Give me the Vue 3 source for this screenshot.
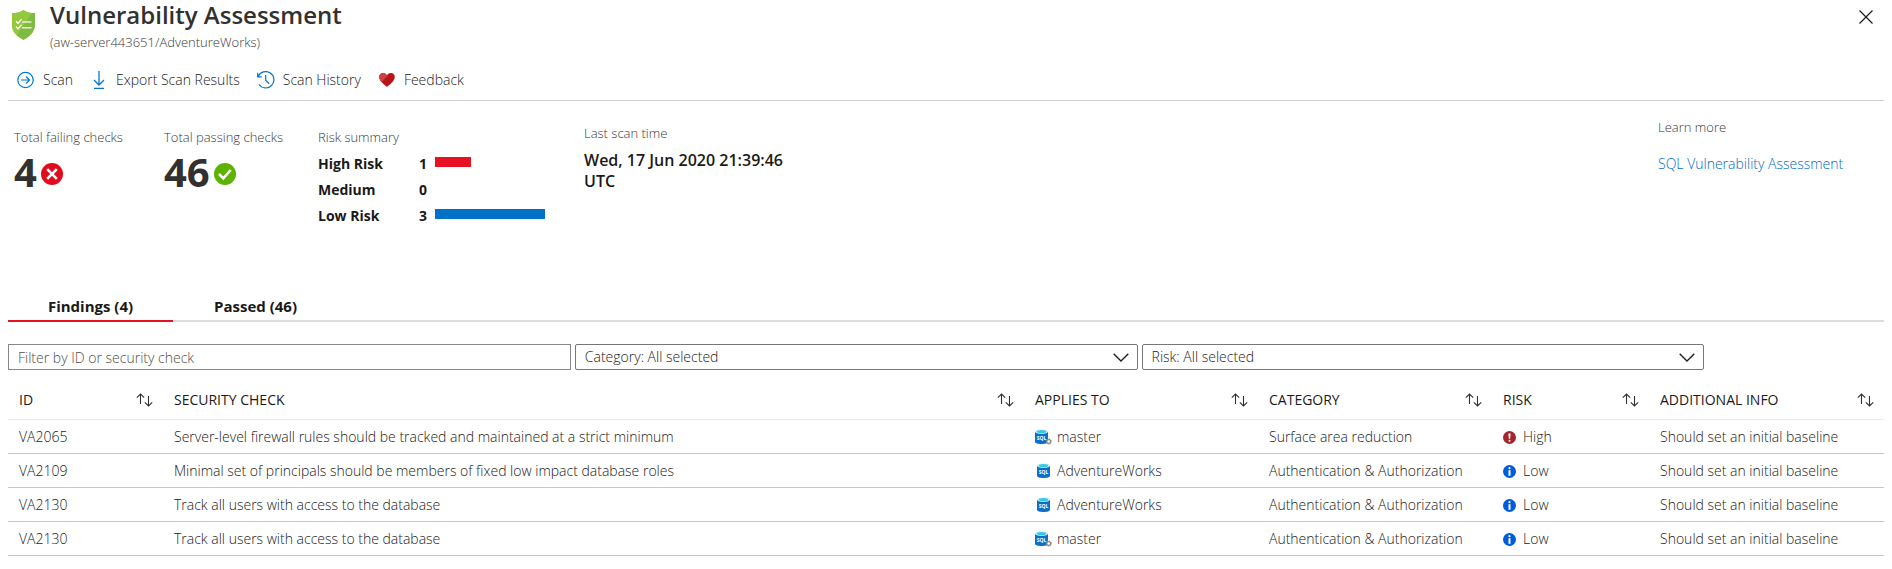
<script setup>
import { ref } from 'vue'

const search = ref('')
const category = ref('all')
const risk = ref('all')
const activeTab = ref('findings')

const tabs = [
  { id: 'findings', label: 'Findings (4)' },
  { id: 'passed', label: 'Passed (46)' },
]

const risks = [
  { label: 'High Risk', count: 1, width: 36, tone: 'high' },
  { label: 'Medium', count: 0, width: 0, tone: 'medium' },
  { label: 'Low Risk', count: 3, width: 110, tone: 'low' },
]

const columns = [
  { key: 'id', label: 'ID' },
  { key: 'check', label: 'SECURITY CHECK' },
  { key: 'target', label: 'APPLIES TO' },
  { key: 'category', label: 'CATEGORY' },
  { key: 'risk', label: 'RISK' },
  { key: 'info', label: 'ADDITIONAL INFO' },
]

const auth = 'Authentication & Authorization'
const info = 'Should set an initial baseline'
const rows = [
  { id: 'VA2065', check: 'Server-level firewall rules should be tracked and maintained at a strict minimum', target: 'master', system: true, category: 'Surface area reduction', risk: 'High', info },
  { id: 'VA2109', check: 'Minimal set of principals should be members of fixed low impact database roles', target: 'AdventureWorks', system: false, category: auth, risk: 'Low', info },
  { id: 'VA2130', check: 'Track all users with access to the database', target: 'AdventureWorks', system: false, category: auth, risk: 'Low', info },
  { id: 'VA2130', check: 'Track all users with access to the database', target: 'master', system: true, category: auth, risk: 'Low', info },
]
</script>

<template>
  <main class="blade">
    <header class="head">
      <svg class="shield" viewBox="0 0 24 30" aria-hidden="true">
        <path d="M12 0C9 2.6 5 3 .5 3v12c0 7.500 6 12 11.500 15 5.500-3 11.500-7.500 11.500-15V3C19 3 15 2.600 12 0z" fill="#7fba42" />
        <path d="M12 0C9 2.600 5 3 .5 3v12c0 4.500 2 7.700 4.700 10.300L20.500 3C17 2.800 14.500 2.200 12 0z" fill="#95c93d" />
        <path d="M4.500 11.200l2 2 3.600-4M4.500 16.800l2 2 3.600-4" fill="none" stroke="#fff" stroke-width="1.300" />
        <path d="M10.500 12h9.500M10.500 17.700h9.500" stroke="#e6f2d6" stroke-width="1.600" />
      </svg>
      <div class="titles">
        <h1>Vulnerability Assessment</h1>
        <p>(aw-server443651/AdventureWorks)</p>
      </div>
      <button class="close" type="button" aria-label="Close">
        <svg viewBox="0 0 14 14" aria-hidden="true"><path d="M.5.5l13 13M13.500.5l-13 13" stroke="#1b1a19" stroke-width="1.200" /></svg>
      </button>
    </header>

    <nav class="toolbar" aria-label="Actions">
      <button type="button">
        <svg viewBox="0 0 18 18" aria-hidden="true"><g fill="none" stroke="#0078d4" stroke-width="1.200"><circle cx="8.500" cy="9" r="7.700" /><path d="M4 9h8.500M9 5.500L12.500 9 9 12.500" /></g></svg>
        Scan
      </button>
      <button type="button">
        <svg viewBox="0 0 18 18" aria-hidden="true"><path d="M9 0v14M4 9l5 5 5-5M4 17.300h10" fill="none" stroke="#0078d4" stroke-width="1.300" /></svg>
        Export Scan Results
      </button>
      <button type="button">
        <svg viewBox="0 0 18 18" aria-hidden="true"><path d="M1.200 5.500A8.200 8.200 0 1 1 2 13.500M.7 1.800v4h4M8.700 4v5.300l3.500 3.400" fill="none" stroke="#0078d4" stroke-width="1.200" /></svg>
        Scan History
      </button>
      <button type="button">
        <svg viewBox="0 0 18 18" aria-hidden="true">
          <path d="M9 16C5.500 13 1.200 9.500 1.200 6 1.200 3.500 3 2 5 2c1.800 0 3.300 1 4 2.500C9.700 3 11.200 2 13 2c2 0 3.800 1.500 3.800 4 0 3.500-4.300 7-7.800 10z" fill="#ba141a" />
          <path d="M3.500 11.300C2.200 9.700 1.200 7.800 1.200 6 1.200 3.500 3 2 5 2c1.800 0 3.300 1 4 2.500.6-1.200 1.600-2 2.700-2.300z" fill="#cf4045" />
        </svg>
        Feedback
      </button>
    </nav>

    <section class="summary">
      <div class="stat">
        <p class="label">Total failing checks</p>
        <div class="total">
          4
          <svg viewBox="0 0 22 22" aria-hidden="true"><circle cx="11" cy="11" r="11" fill="#e00b1c" /><path d="M6.200 6.200l9.600 9.600M15.800 6.200l-9.600 9.600" stroke="#fff" stroke-width="2.600" /></svg>
        </div>
      </div>
      <div class="stat passing">
        <p class="label">Total passing checks</p>
        <div class="total">
          46
          <svg viewBox="0 0 22 22" aria-hidden="true"><circle cx="11" cy="11" r="11" fill="#5db300" /><path d="M5 11l4.300 4.300L16.700 7" fill="none" stroke="#fff" stroke-width="2.600" /></svg>
        </div>
      </div>
      <div class="risks">
        <p class="label">Risk summary</p>
        <ul>
          <li v-for="r in risks" :key="r.label">
            <span>{{ r.label }}</span>
            <span class="count">{{ r.count }}</span>
            <i :class="r.tone" :style="{ width: r.width + 'px' }"></i>
          </li>
        </ul>
      </div>
      <div class="scan">
        <p class="label">Last scan time</p>
        <p class="when">Wed, 17 Jun 2020 21:39:46 UTC</p>
      </div>
      <div class="learn">
        <p class="label">Learn more</p>
        <a href="#">SQL Vulnerability Assessment</a>
      </div>
    </section>

    <div class="tabs" role="tablist">
      <button v-for="t in tabs" :key="t.id" type="button" role="tab" :aria-selected="activeTab === t.id" :class="{ active: activeTab === t.id }" @click="activeTab = t.id">{{ t.label }}</button>
    </div>

    <div class="filters">
      <input v-model="search" type="text" placeholder="Filter by ID or security check" aria-label="Filter by ID or security check" />
      <div class="drop">
        <select v-model="category" aria-label="Category">
          <option value="all">Category: All selected</option>
        </select>
        <svg viewBox="0 0 16 9" aria-hidden="true"><path d="M.7.700L8 8 15.300.7" fill="none" stroke="#1b1a19" stroke-width="1.300" /></svg>
      </div>
      <div class="drop">
        <select v-model="risk" aria-label="Risk">
          <option value="all">Risk: All selected</option>
        </select>
        <svg viewBox="0 0 16 9" aria-hidden="true"><path d="M.7.700L8 8 15.300.7" fill="none" stroke="#1b1a19" stroke-width="1.300" /></svg>
      </div>
    </div>

    <table>
      <colgroup>
        <col v-for="c in columns" :key="c.key" :class="'col-' + c.key" />
      </colgroup>
      <thead>
        <tr>
          <th v-for="c in columns" :key="c.key" scope="col">
            <button type="button">
              {{ c.label }}
              <svg viewBox="0 0 17 14" aria-hidden="true"><path d="M4.500 11V1.200M.8 4.700l3.700-3.700 3.700 3.700M12.500 3v9.800M8.800 9.300l3.700 3.700 3.700-3.700" fill="none" stroke="#323130" stroke-width="1.100" /></svg>
            </button>
          </th>
        </tr>
      </thead>
      <tbody>
        <tr v-for="(row, i) in rows" :key="i">
          <td>{{ row.id }}</td>
          <td>{{ row.check }}</td>
          <td>
            <div class="cell">
              <svg class="db" viewBox="0 0 17 16" aria-hidden="true">
                <g :transform="row.system ? 'translate(0 0)' : 'translate(2 0)'">
                  <path d="M0 2.500v10.300C0 14.200 2.900 15 6.500 15s6.500-.8 6.500-2.200V2.500z" fill="#0a6fc8" />
                  <ellipse cx="6.500" cy="2.500" rx="6.500" ry="2.300" fill="#d9f3fb" />
                  <ellipse cx="6.500" cy="2.600" rx="4.800" ry="1.500" fill="#32c8e8" />
                  <text x="6.500" y="10.500" text-anchor="middle">SQL</text>
                </g>
                <g v-if="row.system" fill="none" stroke="#8a8886">
                  <circle cx="13.700" cy="12.500" r="1.900" fill="#fff" stroke-width="1.200" />
                  <circle cx="13.700" cy="12.500" r="2.700" stroke-width="1" stroke-dasharray="1.060 1.060" />
                </g>
              </svg>
              {{ row.target }}
            </div>
          </td>
          <td>{{ row.category }}</td>
          <td>
            <div class="cell">
              <svg class="level" viewBox="0 0 13 13" aria-hidden="true">
                <template v-if="row.risk === 'High'">
                  <circle cx="6.500" cy="6.500" r="6.500" fill="#a4262c" />
                  <path d="M5.400 2.500h2.200l-.4 5.200H5.800z" fill="#fff" /><circle cx="6.500" cy="9.700" r="1" fill="#fff" />
                </template>
                <template v-else>
                  <circle cx="6.500" cy="6.500" r="6.500" fill="#015cda" />
                  <circle cx="6.500" cy="3.200" r="1.100" fill="#fff" /><path d="M5.500 5.200h2v5.600h-2z" fill="#fff" />
                </template>
              </svg>
              {{ row.risk }}
            </div>
          </td>
          <td>{{ row.info }}</td>
        </tr>
      </tbody>
    </table>
  </main>
</template>

<style>
body {
  margin: 0;
  background: #fff;
}
</style>

<style scoped>
* {
  box-sizing: border-box;
}
.blade {
  padding: 0 8px;
  font: 300 14px/20px "Segoe UI", "Open Sans", sans-serif;
  color: #1b1a19;
}
h1,
p,
ul {
  margin: 0;
  padding: 0;
}
button {
  font: inherit;
  color: inherit;
  background: none;
  border: 0;
  padding: 0;
  cursor: pointer;
}
svg {
  flex: none;
  display: block;
}
.head {
  display: flex;
  align-items: flex-start;
  padding-left: 3px;
}
.shield {
  width: 25px;
  height: 30px;
  margin-top: 10px;
}
.titles {
  flex: 1;
  margin-left: 14px;
}
h1 {
  font-size: 24px;
  line-height: 30px;
  font-weight: 600;
  color: #323130;
}
.titles p {
  margin-top: 3px;
  font-size: 13px;
  line-height: 18px;
  color: #3b3a39;
}
.close {
  margin: 10px 11px 0 0;
}
.close svg {
  width: 14px;
  height: 14px;
}
.toolbar {
  display: flex;
  gap: 17px;
  padding: 19px 9px 10px;
  border-bottom: 1px solid #d2d0ce;
}
.toolbar button {
  display: flex;
  align-items: center;
  gap: 8px;
}
.toolbar svg {
  width: 18px;
  height: 18px;
}
.summary {
  display: flex;
  align-items: flex-start;
  padding: 17px 0 57px 6px;
}
.label {
  font-size: 13px;
  line-height: 18px;
  color: #3b3a39;
}
.stat {
  width: 150px;
  padding-top: 10px;
}
.passing {
  width: 154px;
}
.total {
  display: flex;
  align-items: center;
  gap: 4px;
  margin-top: 2px;
  font-size: 40px;
  line-height: 48px;
  font-weight: 700;
  color: #323130;
}
.total svg {
  width: 22px;
  height: 22px;
  margin-top: 4px;
}
.risks {
  width: 266px;
  padding-top: 10px;
}
.risks ul {
  list-style: none;
  margin-top: 5px;
}
.risks li {
  display: grid;
  grid-template-columns: 93px 8px 1fr;
  column-gap: 8px;
  line-height: 26px;
  font-weight: 700;
}
.count {
  text-align: center;
}
.risks i {
  height: 10px;
  margin-top: 6px;
}
.high {
  background: #e81123;
}
.low {
  background: #0072c6;
}
.scan {
  width: 216px;
  padding-top: 6px;
}
.when {
  margin-top: 8px;
  font-size: 16px;
  line-height: 21px;
  font-weight: 600;
}
.learn {
  width: 226px;
  margin-left: auto;
}
.learn a {
  display: block;
  margin-top: 18px;
  color: #006cc4;
  text-decoration: none;
}
.tabs {
  display: flex;
  border-bottom: 2px solid #dddddd;
}
.tabs button {
  min-width: 165px;
  margin-bottom: -2px;
  padding: 10px 38px 4px;
  font-size: 15px;
  font-weight: 700;
  border-bottom: 2px solid transparent;
}
.tabs .active {
  border-color: #e81123;
}
.filters {
  display: flex;
  gap: 4px;
  margin-top: 22px;
}
.filters input,
.drop {
  width: 30%;
  height: 26px;
}
.filters input,
.filters select {
  font: inherit;
  line-height: 20px;
  color: #1b1a19;
  background: #fff;
  border: 1px solid #8a8886;
  border-radius: 0;
  padding: 0 9px;
}
.filters input::placeholder {
  color: #504e4c;
  opacity: 1;
}
.drop {
  position: relative;
}
.drop select {
  appearance: none;
  width: 100%;
  height: 100%;
  border-color: #797775;
  border-radius: 2px;
}
.drop svg {
  position: absolute;
  right: 9px;
  top: 9px;
  width: 16px;
  height: 9px;
  pointer-events: none;
}
table {
  width: 100%;
  border-collapse: separate;
  border-spacing: 0;
  table-layout: fixed;
}
.col-id {
  width: 155px;
}
.col-target,
.col-category {
  width: 234px;
}
.col-risk {
  width: 157px;
}
.col-info {
  width: 235px;
}
th,
td {
  text-align: left;
  white-space: nowrap;
}
th {
  padding: 20px 10px 9px 11px;
  font-weight: 400;
  border-bottom: 1px solid #eaeaea;
}
th button {
  display: flex;
  align-items: center;
  justify-content: space-between;
  width: 100%;
}
th svg {
  width: 17px;
  height: 14px;
}
td {
  padding: 7px 0 6px 11px;
  border-bottom: 1px solid #c8c6c4;
}
.cell {
  display: flex;
  align-items: center;
}
.db {
  width: 17px;
  height: 16px;
  margin-right: 5px;
}
.db text {
  font: 700 5px "Open Sans", sans-serif;
  fill: #fff;
}
.level {
  width: 13px;
  height: 13px;
  margin-right: 7px;
}
</style>
